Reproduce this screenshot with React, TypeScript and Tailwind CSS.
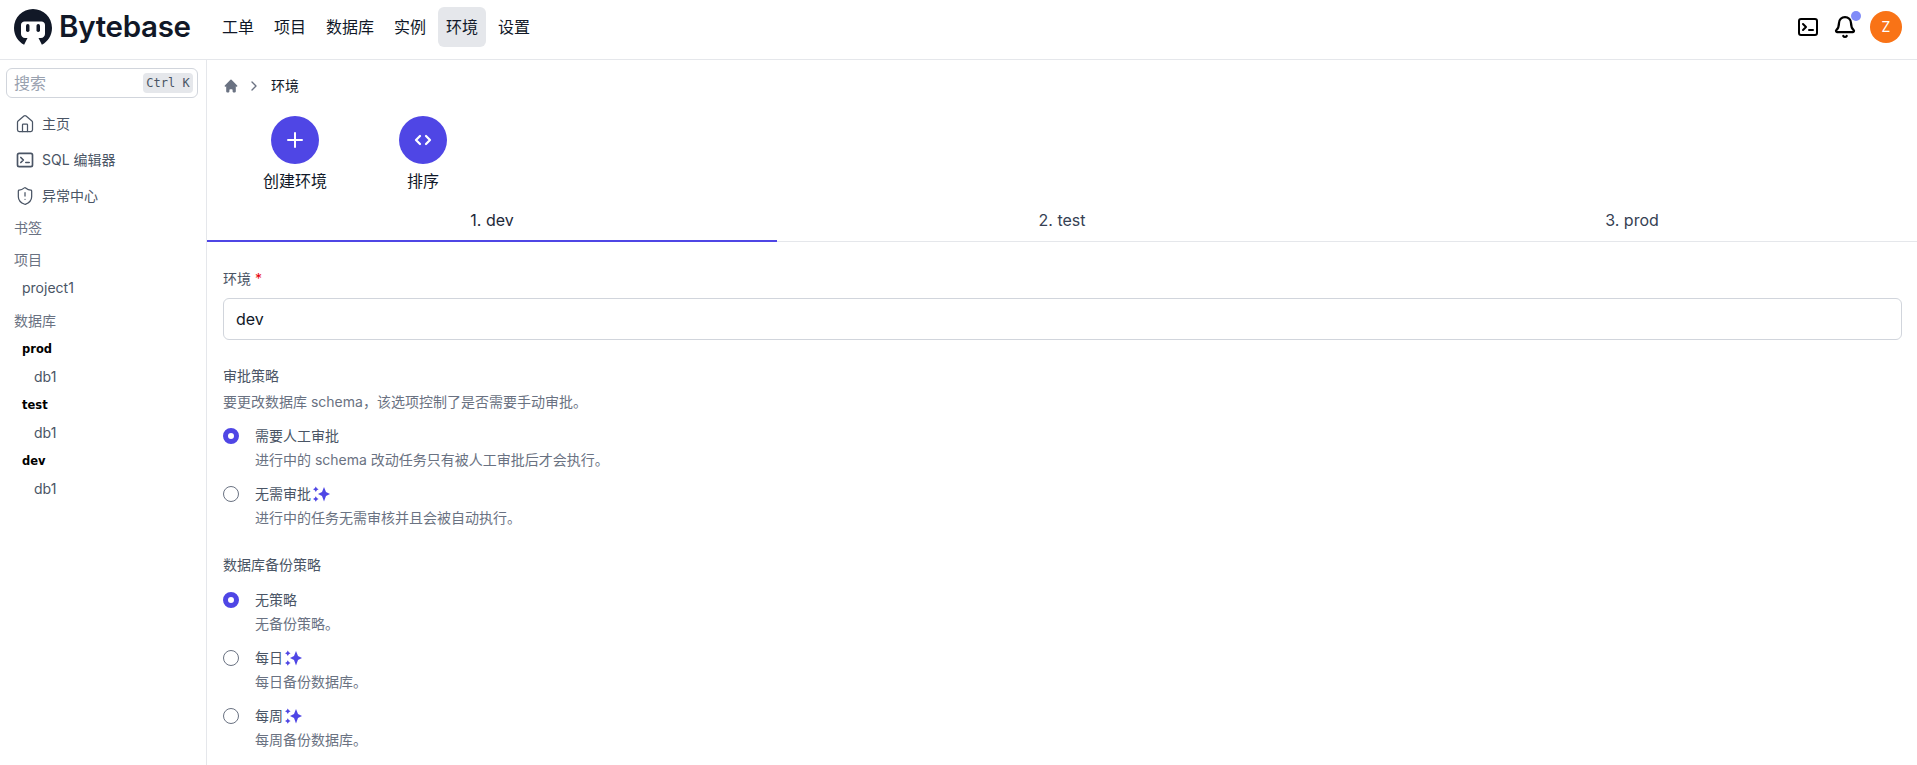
import { Bell, ChevronRight, Home, Plus, ShieldAlert } from "lucide-react";
import { HiHome } from "react-icons/hi";

const cjk = `Inter, "Noto Sans CJK SC", sans-serif`;

function Logo() {
  return (
    <svg viewBox="0 0 38 36" className="h-[36px] w-[38px]">
      <path
        d="M19 0C8.500 0 0 8.500 0 19c0 7.300 4.100 13.600 10.100 16.800L13.500 29H11c-2.200 0-4-1.800-4-4v-9c0-2 1.600-3.500 3.500-3.500h17c1.900 0 3.500 1.500 3.500 3.500v9c0 2.200-1.800 4-4 4h-2.500l3.400 6.800C33.900 32.600 38 26.300 38 19 38 8.500 29.500 0 19 0Z"
        fill="#111827"
      />
      <rect x="12" y="15" width="3.500" height="8" rx="1.700" fill="#111827" />
      <rect x="22.500" y="15" width="3.500" height="8" rx="1.700" fill="#111827" />
    </svg>
  );
}

function TerminalIcon({ className }: { className?: string }) {
  return (
    <svg
      viewBox="0 0 24 24"
      fill="none"
      stroke="currentColor"
      strokeWidth={2}
      strokeLinecap="round"
      strokeLinejoin="round"
      className={className}
    >
      <rect x="3" y="4" width="18" height="16" rx="2" />
      <path d="m7 9 3 3-3 3" />
      <path d="M13 15h4" />
    </svg>
  );
}

function Sparkle() {
  return (
    <svg viewBox="0 0 17 16" className="ml-[2px] h-4 w-[17px]" fill="#4f46e5">
      <path d="M11 1 13 6 17 8 13 10 11 15.500 9 10 5 8 9 6Z" />
      <path d="M2.800 0.500 3.800 2.300 5.600 3.300 3.800 4.300 2.800 6.100 1.800 4.300 0 3.300 1.800 2.300Z" />
      <path d="M2.800 10.200 3.800 12 5.600 13 3.800 14 2.800 15.800 1.800 14 0 13 1.800 12Z" />
    </svg>
  );
}

function Radio({ label, desc, checked, pro }: { label: string; desc: string; checked?: boolean; pro?: boolean }) {
  return (
    <div className="flex h-12 items-start gap-2">
      <div className="flex h-6 w-6 items-center">
        {checked ? (
          <div className="h-4 w-4 rounded-full border-[5px] border-[#4f46e5] bg-white" />
        ) : (
          <div className="h-4 w-4 rounded-full border border-gray-500 bg-white" />
        )}
      </div>
      <div className="text-sm leading-6">
        <div className="flex h-6 items-center text-gray-600">
          {label}
          {pro && <Sparkle />}
        </div>
        <div className="text-gray-500">{desc}</div>
      </div>
    </div>
  );
}

const navItems = ["工单", "项目", "数据库", "实例", "环境", "设置"];

export default function App() {
  return (
    <div className="flex h-[765px] flex-col overflow-hidden bg-white text-gray-900" style={{ fontFamily: cjk }}>
      <header className="flex h-[60px] shrink-0 items-center border-b border-gray-200 pb-[5px] pl-[14px] pr-[15px]">
        <div className="flex w-[200px] items-center gap-[7px]">
          <Logo />
          <span className="text-[29.5px] font-semibold leading-none tracking-[-0.3px] text-[#111827]">Bytebase</span>
        </div>
        <nav className="flex gap-1">
          {navItems.map((item) => (
            <div
              key={item}
              className={`flex h-10 items-center rounded-md px-2 text-base ${item === "环境" ? "bg-gray-200" : ""}`}
            >
              {item}
            </div>
          ))}
        </nav>
        <div className="ml-auto flex items-center gap-[13px]">
          <TerminalIcon className="h-6 w-6 text-black" />
          <div className="relative">
            <Bell className="h-6 w-6 text-black" strokeWidth={2.25} />
            <span className="absolute -right-[4px] -top-[4px] h-[10px] w-[10px] rounded-full bg-[#818cf8]" />
          </div>
          <div className="flex h-8 w-8 items-center justify-center rounded-full bg-[#f97316] text-sm text-white">Z</div>
        </div>
      </header>

      <div className="flex min-h-0 flex-1">
        <aside className="w-[207px] shrink-0 border-r border-gray-200 text-sm text-gray-600">
          <div className="mx-[6px] mt-2 flex h-[30px] w-[192px] items-center justify-between rounded-md border border-gray-300 pl-[7px] pr-1">
            <span className="text-base text-gray-400">搜索</span>
            <kbd
              className="flex h-5 w-[50px] items-center justify-center rounded bg-gray-200 text-xs text-gray-600"
              style={{ fontFamily: `"DejaVu Sans Mono", monospace` }}
            >
              Ctrl K
            </kbd>
          </div>
          <div className="mt-[10px] flex flex-col gap-[4px] pl-[15px]">
            <div className="flex h-8 items-center gap-[7px]">
              <Home className="h-5 w-5" strokeWidth={1.5} />
              主页
            </div>
            <div className="flex h-8 items-center gap-[7px]">
              <TerminalIcon className="h-5 w-5" />
              SQL 编辑器
            </div>
            <div className="flex h-8 items-center gap-[7px]">
              <ShieldAlert className="h-5 w-5" strokeWidth={1.5} />
              异常中心
            </div>
          </div>
          <div className="mt-[2px] flex flex-col pl-[14px]">
            <div className="flex h-7 items-center text-gray-500">书签</div>
            <div className="mt-1 flex h-7 items-center text-gray-500">项目</div>
            <div className="flex h-7 items-center pl-2">project1</div>
            <div className="mt-[5px] flex h-7 items-center text-gray-500">数据库</div>
            {["prod", "test", "dev"].map((env) => (
              <div key={env}>
                <div
                  className="flex h-7 items-center pl-2 text-[11.5px] font-bold text-black"
                  style={{ fontFamily: `"DejaVu Sans", sans-serif` }}
                >
                  {env}
                </div>
                <div className="flex h-7 items-center pl-5">db1</div>
              </div>
            ))}
          </div>
        </aside>

        <main className="min-w-0 flex-1">
          <div className="flex h-[52px] items-center pl-4 text-sm">
            <HiHome className="h-4 w-4 text-gray-500" />
            <ChevronRight className="ml-[7px] h-4 w-4 text-gray-500" />
            <span className="ml-[9px] text-gray-900">环境</span>
          </div>
          <div className="mt-[4px] flex pl-[56px]">
            <div className="flex w-16 flex-col items-center">
              <div className="flex h-12 w-12 items-center justify-center rounded-full bg-[#4f46e5] text-white">
                <Plus className="h-6 w-6" strokeWidth={2} />
              </div>
              <div className="mt-[5px] text-base leading-6">创建环境</div>
            </div>
            <div className="ml-[72px] flex w-12 flex-col items-center">
              <div className="flex h-12 w-12 items-center justify-center rounded-full bg-[#4f46e5] text-white">
                <svg
                  viewBox="0 0 20 20"
                  fill="none"
                  stroke="currentColor"
                  strokeWidth={2.25}
                  strokeLinecap="round"
                  strokeLinejoin="round"
                  className="h-5 w-5"
                >
                  <path d="m7 6-4 4 4 4" />
                  <path d="m13 6 4 4-4 4" />
                </svg>
              </div>
              <div className="mt-[5px] text-base leading-6">排序</div>
            </div>
          </div>
          <div className="mt-[1px] flex h-[48px] border-b border-gray-200 text-base text-gray-700">
            <div className="-mb-px flex flex-1 items-center justify-center border-b-2 border-[#4f46e5] pt-[5px] text-gray-800">
              1. dev
            </div>
            <div className="flex flex-1 items-center justify-center pt-[5px]">2. test</div>
            <div className="flex flex-1 items-center justify-center pt-[5px]">3. prod</div>
          </div>

          <div className="pl-4 pr-[15px] text-sm">
            <div className="mt-[27px] h-5 leading-5 text-gray-600">
              环境 <span className="text-red-600">*</span>
            </div>
            <div className="mt-[9px] flex h-[42px] items-center rounded-md border border-gray-300 pl-3 text-base text-gray-900">dev</div>
            <div className="mt-[26px] h-5 leading-5 text-gray-600">审批策略</div>
            <div className="mt-[6px] h-5 leading-5 text-gray-500">要更改数据库 schema，该选项控制了是否需要手动审批。</div>
            <div className="mt-[12px] flex flex-col gap-[10px]">
              <Radio checked label="需要人工审批" desc="进行中的 schema 改动任务只有被人工审批后才会执行。" />
              <Radio pro label="无需审批" desc="进行中的任务无需审核并且会被自动执行。" />
            </div>
            <div className="mt-[25px] h-5 leading-5 text-gray-600">数据库备份策略</div>
            <div className="mt-[13px] flex flex-col gap-[10px]">
              <Radio checked label="无策略" desc="无备份策略。" />
              <Radio pro label="每日" desc="每日备份数据库。" />
              <Radio pro label="每周" desc="每周备份数据库。" />
            </div>
          </div>
        </main>
      </div>
    </div>
  );
}
